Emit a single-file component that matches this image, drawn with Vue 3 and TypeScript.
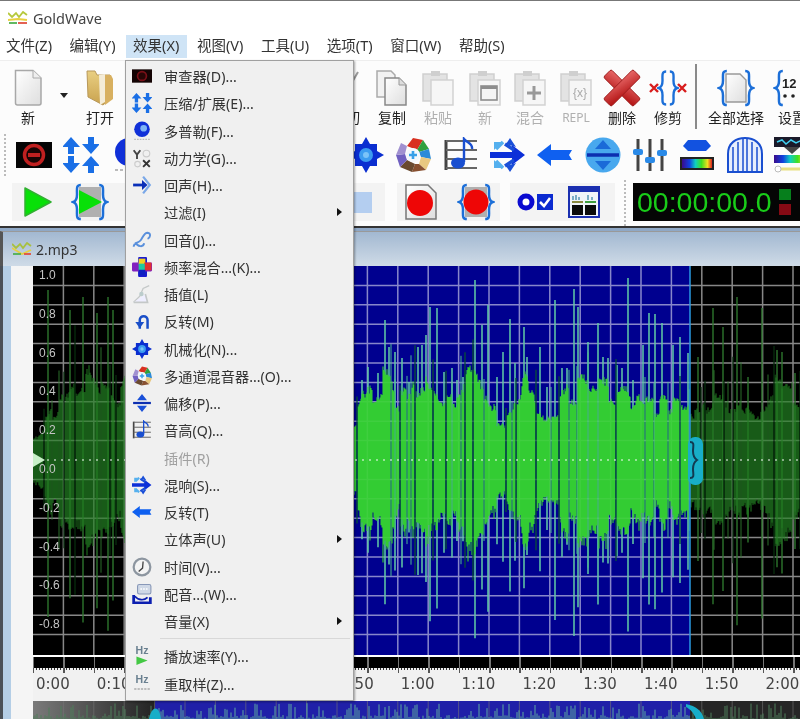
<script setup lang="ts">
interface MenuEntry { label?: string; icon?: string; disabled?: boolean; sub?: boolean; sep?: boolean }
interface Tool { icon?: string; label?: string; off?: boolean; small?: boolean; kind?: string }

const menus: string[] = ['文件(Z)', '编辑(Y)', '效果(X)', '视图(V)', '工具(U)', '选项(T)', '窗口(W)', '帮助(S)']

const tools: Tool[] = [
  { icon: 'doc', label: '新' },
  { kind: 'drop' },
  { icon: 'folder', label: '打开' },
  { kind: 'gap' },
  { icon: 'cut', label: '剪切' },
  { icon: 'copy', label: '复制' },
  { icon: 'paste', label: '粘贴', off: true },
  { icon: 'pastenew', label: '新', off: true },
  { icon: 'pastemix', label: '混合', off: true },
  { icon: 'pasterepl', label: 'REPL', off: true, small: true },
  { icon: 'del', label: '删除' },
  { icon: 'trim', label: '修剪' },
  { kind: 'sep' },
  { icon: 'selall', label: '全部选择' },
  { icon: 'setup', label: '设置' },
]

const effects: string[] = ['stop', 'comp', 'doppler', '', '', '', '', 'gear', 'mix', 'note', 'reverb', 'left', 'offset', 'sliders', 'hue', 'arch', 'spectrum']

const menuItems: MenuEntry[] = [
  { label: '审查器(D)...', icon: 'stopm' },
  { label: '压缩/扩展(E)...', icon: 'comp' },
  { label: '多普勒(F)...', icon: 'doppler' },
  { label: '动力学(G)...', icon: 'dyn' },
  { label: '回声(H)...', icon: 'echo' },
  { label: '过滤(I)', sub: true },
  { label: '回音(J)...', icon: 'flange' },
  { label: '频率混合...(K)...', icon: 'eq' },
  { label: '插值(L)', icon: 'interp' },
  { label: '反转(M)', icon: 'invert' },
  { label: '机械化(N)...', icon: 'gear' },
  { label: '多通道混音器...(O)...', icon: 'mix' },
  { label: '偏移(P)...', icon: 'shift' },
  { label: '音高(Q)...', icon: 'note' },
  { label: '插件(R)', disabled: true },
  { label: '混响(S)...', icon: 'reverb' },
  { label: '反转(T)', icon: 'left' },
  { label: '立体声(U)', sub: true },
  { label: '时间(V)...', icon: 'clock' },
  { label: '配音...(W)...', icon: 'voice' },
  { label: '音量(X)', sub: true },
  { sep: true },
  { label: '播放速率(Y)...', icon: 'hzplay' },
  { label: '重取样(Z)...', icon: 'hzres' },
]

const yLabels = ['1.0', '0.8', '0.6', '0.4', '0.2', '0.0', '-0.2', '-0.4', '-0.6', '-0.8']
const rulerLabels = ['0:00', '0:10', '0:20', '0:30', '0:40', '0:50', '1:00', '1:10', '1:20', '1:30', '1:40', '1:50', '2:00']

/* ---- waveform geometry, local x = page x - 33, y = page y - 266 ---- */
const W = 767
const H = 389
const MID = 194
const SEL_A = 155 - 33
const SEL_B = 690 - 33

let seed = 12345
const rnd = (): number => {
  seed = (seed * 1664525 + 1013904223) % 4294967296
  return seed / 4294967296
}

const env: [number, number][] = [
  [33, 18], [45, 35], [60, 55], [75, 82], [90, 90], [100, 70], [115, 60], [126, 70], [150, 60], [200, 70], [250, 60],
  [300, 50], [354, 40], [366, 65], [385, 80], [400, 55], [410, 70], [425, 85], [440, 55], [455, 60], [470, 85],
  [490, 45], [510, 40], [525, 75], [545, 45], [560, 55], [580, 75], [600, 70], [620, 60], [640, 60], [660, 52],
  [690, 50], [700, 50], [715, 65], [740, 60], [760, 50], [775, 70], [785, 65], [800, 55],
]
const envAt = (x: number): number => {
  for (let i = 1; i < env.length; i++) {
    if (x <= env[i][0]) {
      const [x0, y0] = env[i - 1]
      const [x1, y1] = env[i]
      return y0 + ((y1 - y0) * (x - x0)) / (x1 - x0)
    }
  }
  return 50
}

/* spike peaks read from the picture: [page x, page top y] */
const peaks: [number, number][] = [
  [48, 290], [70, 310], [83, 297], [97, 313], [108, 297], [113, 310],
  [362, 380], [368, 367], [378, 373], [385, 320], [389, 347], [395, 352], [402, 358], [409, 382], [418, 347], [422, 345],
  [426, 335], [430, 307], [437, 308], [444, 372], [452, 368], [457, 380], [463, 377], [475, 280], [482, 325], [488, 305],
  [497, 377], [503, 352], [510, 319], [515, 363], [524, 327], [527, 357], [540, 347], [547, 387], [555, 300], [562, 368],
  [567, 368], [574, 289], [578, 307], [588, 342], [598, 323], [603, 357], [608, 358], [617, 365], [622, 368], [628, 278],
  [633, 380], [643, 345], [649, 313], [655, 314], [662, 323], [673, 345], [680, 337], [688, 353],
  [698, 357], [713, 308], [723, 327], [737, 297], [748, 377], [762, 308], [777, 350], [782, 352], [795, 373],
]

const line = (x: number, a: number, b: number): string => `M${x} ${(MID - a).toFixed(1)}V${(MID + b).toFixed(1)}`
let bodySel = '', bodyDim = '', slitSel = '', slitDim = '', midSel = '', midDim = '', peakSel = '', peakDim = ''

for (const [px, top] of peaks) {
  const x = px - 33
  const a = 460 - top
  const b = a * (0.92 + rnd() * 0.14)
  const seg = line(x, a, b)
  if (x > SEL_A && x < SEL_B) peakSel += seg
  else peakDim += seg
}

/* the body is built from narrow bursts of differing height, split by dark slits */
let cx = 0
while (cx < W) {
  const burst = 3 + Math.floor(rnd() * 8)
  const gain = 0.78 + rnd() * 0.42
  for (let i = 0; i < burst && cx < W; i++, cx++) {
    const e = envAt(cx + 33) * gain * (0.94 + rnd() * 0.12)
    const inSel = cx > SEL_A && cx < SEL_B
    const seg = line(cx, e, e * (0.9 + rnd() * 0.2))
    if (inSel) bodySel += seg
    else bodyDim += seg
  }
  if (rnd() < 0.62) {
    const inSel = cx > SEL_A && cx < SEL_B
    const e = envAt(cx + 33) * (1.25 + rnd() * 0.45)
    const seg = line(cx, e, e)
    if (rnd() < 0.6) {
      if (inSel) slitSel += seg
      else slitDim += seg
    } else if (inSel) midSel += seg
    else midDim += seg
    cx += 1
  }
}

let gridH = ''
for (let k = 1; k < 20; k++) if (k !== 10) gridH += `M0 ${(19.4 * k).toFixed(1)}H${W}`
let gridV = ''
for (let k = 1; k * 30.4 < W; k++) gridV += `M${(k * 30.4).toFixed(1)} 0V${H}`
const grid = gridH + gridV

let miniSel = '', miniDim = ''
for (let x = 0; x < W; x += 2) {
  const h = rnd() < 0.3 ? 4 + rnd() * 12 : rnd() * 4
  const seg = `M${x} 18V${(18 - h).toFixed(1)}`
  if (x > SEL_A && x < SEL_B) miniSel += seg
  else miniDim += seg
}
let miniGrid = ''
for (let k = 1; k * 30.4 < W; k++) miniGrid += `M${(k * 30.4).toFixed(1)} 0V18`
</script>

<template>
  <div class="app">
    <svg class="defs" aria-hidden="true">
      <defs>
        <linearGradient id="paper" x1="0" y1="0" x2="1" y2="1"><stop offset="0" stop-color="#fff" /><stop offset="1" stop-color="#dedede" /></linearGradient>
        <linearGradient id="gold" x1="0" y1="0" x2="0" y2="1"><stop offset="0" stop-color="#e9cf82" /><stop offset="1" stop-color="#c9a24e" /></linearGradient>
        <linearGradient id="redx" x1="0" y1="0" x2="1" y2="1"><stop offset="0" stop-color="#e96a6a" /><stop offset="1" stop-color="#b01010" /></linearGradient>
        <linearGradient id="rainbow" x1="0" y1="0" x2="1" y2="0">
          <stop offset="0" stop-color="#3a0a8a" /><stop offset=".25" stop-color="#1040e0" /><stop offset=".45" stop-color="#10d0c0" /><stop offset=".65" stop-color="#40e020" /><stop offset=".85" stop-color="#f0e020" /><stop offset="1" stop-color="#e02020" />
        </linearGradient>

        <symbol id="brace-l" viewBox="0 0 12 40"><path d="M10 2C5 2 6 6 6 12c0 5-1 7-4 8 3 1 4 3 4 8 0 6-1 10 4 10" fill="none" stroke="#1c6fd8" stroke-width="2.6" /></symbol>
        <symbol id="brace-r" viewBox="0 0 12 40"><path d="M2 2c5 0 4 4 4 10 0 5 1 7 4 8-3 1-4 3-4 8 0 6 1 10-4 10" fill="none" stroke="#1c6fd8" stroke-width="2.6" /></symbol>

        <symbol id="doc" viewBox="0 0 30 38"><path d="M2.500 1.500H20L28 9V34a2 2 0 0 1-2 2H4.500a2 2 0 0 1-2-2Z" fill="url(#paper)" stroke="#a8a8a8" stroke-width="1.500" /><path d="M20 1.500V9H28" fill="#eee" stroke="#aaa" /></symbol>
        <symbol id="folder" viewBox="0 0 30 38"><path d="M2 2H10L12 6H25V30L18 36L3 28Z" fill="url(#gold)" stroke="#b8985a" /><path d="M14 6L20 5V33L15 36Z" fill="#f4ecd8" /><path d="M20 6H26L28 10V30L20 36Z" fill="#d8b060" /></symbol>
        <symbol id="cut" viewBox="0 0 36 38"><path d="M12 34L30 3M24 34L6 3" stroke="#999" stroke-width="2" fill="none" /></symbol>
        <symbol id="copy" viewBox="0 0 34 38"><path d="M2 2H16L20 6V28H2Z" fill="#f2f2f2" stroke="#aaa" stroke-width="1.500" /><path d="M10 9H24L31 16V36H10Z" fill="url(#paper)" stroke="#888" stroke-width="1.500" /><path d="M24 9V16H31" fill="#ddd" stroke="#999" /></symbol>
        <symbol id="clip" viewBox="0 0 34 38"><path d="M2 5H26V32H2Z" fill="#e3e3e3" stroke="#cfcfcf" stroke-width="1.500" /><rect x="10" y="2" width="9" height="5" fill="#cfcfcf" /><path d="M10 11H32V36H10Z" fill="#f6f6f6" stroke="#d2d2d2" stroke-width="1.500" /></symbol>
        <symbol id="paste" viewBox="0 0 34 38"><use href="#clip" width="34" height="38" /></symbol>
        <symbol id="pastenew" viewBox="0 0 34 38"><use href="#clip" width="34" height="38" /><rect x="13" y="17" width="16" height="14" fill="#f4f4f4" stroke="#8d8d8d" stroke-width="1.600" /><rect x="13" y="17" width="16" height="3" fill="#8d8d8d" /></symbol>
        <symbol id="pastemix" viewBox="0 0 34 38"><use href="#clip" width="34" height="38" /><path d="M21 17V31M14 24H28" stroke="#999" stroke-width="3" /></symbol>
        <symbol id="pasterepl" viewBox="0 0 34 38"><use href="#clip" width="34" height="38" /><text x="21" y="28" text-anchor="middle" font-size="12" fill="#aaa" font-family="Liberation Sans, sans-serif">{x}</text></symbol>
        <symbol id="del" viewBox="0 0 42 42"><g transform="rotate(45 21 21)"><rect x="-2" y="15" width="46" height="12" rx="2" fill="url(#redx)" stroke="#9c1c1c" /><rect x="15" y="-2" width="12" height="46" rx="2" fill="url(#redx)" stroke="#9c1c1c" /></g></symbol>
        <symbol id="trim" viewBox="0 0 38 38"><use href="#brace-l" x="8" y="0" width="11" height="38" /><use href="#brace-r" x="19" y="0" width="11" height="38" /><path d="M1 15L9 23M9 15L1 23M29 15L37 23M37 15L29 23" stroke="#d81c1c" stroke-width="2.400" /></symbol>
        <symbol id="selall" viewBox="0 0 38 38"><use href="#brace-l" x="0" y="0" width="12" height="38" /><use href="#brace-r" x="26" y="0" width="12" height="38" /><path d="M9 5H23L29 11V33H9Z" fill="url(#paper)" stroke="#999" stroke-width="1.400" /></symbol>
        <symbol id="setup" viewBox="0 0 38 38"><use href="#brace-l" x="0" y="0" width="12" height="38" /><text x="9" y="19" font-size="13" font-weight="700" fill="#222" font-family="Liberation Sans, sans-serif">12</text><circle cx="12" cy="27" r="1.800" fill="#222" /><circle cx="20" cy="27" r="1.800" fill="#222" /></symbol>

        <symbol id="stop" viewBox="0 0 36 36"><rect x="0" y="5" width="36" height="26" fill="#050505" /><circle cx="18" cy="18" r="9.500" fill="#1a0404" stroke="#c02020" stroke-width="3.500" /><path d="M12 18H24" stroke="#c02020" stroke-width="4" /></symbol>
        <symbol id="stopm" viewBox="0 0 36 36"><rect x="0" y="6" width="36" height="24" fill="#140404" /><circle cx="18" cy="18" r="8" fill="#280606" stroke="#7a1018" stroke-width="3" /></symbol>
        <symbol id="comp" viewBox="0 0 36 36">
          <g fill="#1a6fe6"><path d="M8 0L17 10H11V17H5V10H-1Z" /><path d="M28 17L19 7H25V0H31V7H37Z" /><path d="M8 36L-1 26H5V19H11V26H17Z" /><path d="M28 19L37 29H31V36H25V29H19Z" /></g>
        </symbol>
        <symbol id="doppler" viewBox="0 0 36 36"><circle cx="18" cy="15" r="14" fill="#1030d8" /><circle cx="21" cy="13" r="6" fill="#7fb4f5" /><path d="M4 33H32" stroke="#bbb" stroke-width="2" stroke-dasharray="3 2" /></symbol>
        <symbol id="dyn" viewBox="0 0 36 36"><path d="M3 4L9 12L15 4M9 12V20" stroke="#444" stroke-width="3.400" fill="none" /><path d="M20 22L32 34M32 22L20 34" stroke="#333" stroke-width="3.400" /><circle cx="26" cy="10" r="6" fill="none" stroke="#ccc" stroke-width="2" /><circle cx="10" cy="29" r="5" fill="none" stroke="#ccc" stroke-width="2" /></symbol>
        <symbol id="echo" viewBox="0 0 36 36"><path d="M20 3L32 18L20 33" fill="none" stroke="#7aa8e8" stroke-width="4" /><path d="M2 18H22" stroke="#0a2fb8" stroke-width="5" /><path d="M18 9L28 18L18 27Z" fill="#0a2fb8" /></symbol>
        <symbol id="flange" viewBox="0 0 36 36"><path d="M3 30C3 22 12 24 16 18C20 12 22 5 28 5C35 6 33 14 28 16M6 22C10 30 20 32 22 24" fill="none" stroke="#5a90dc" stroke-width="3.400" /></symbol>
        <symbol id="eq" viewBox="0 0 36 36"><rect x="11" y="0" width="16" height="36" rx="2" fill="#1a1ad0" /><rect x="0" y="10" width="36" height="16" rx="2" fill="#8020c0" /><rect x="12" y="3" width="12" height="10" fill="#f0d020" /><rect x="22" y="10" width="13" height="14" fill="#e03030" /><rect x="12" y="12" width="11" height="12" fill="#20c8a0" /><rect x="12" y="23" width="12" height="10" fill="#1020c0" /></symbol>
        <symbol id="interp" viewBox="0 0 36 36"><path d="M3 33L14 22L20 8L31 3" stroke="#c4c8c8" stroke-width="2.400" fill="none" /><path d="M3 33H28L24 18" stroke="#c4c8c8" stroke-width="3" fill="#eef" /><circle cx="17" cy="18" r="4" fill="#bcc" /></symbol>
        <symbol id="invert" viewBox="0 0 36 36"><path d="M14 32V16C14 7 28 7 28 16V32" fill="none" stroke="#1a4fc8" stroke-width="4.500" /><path d="M6 20L14 31L22 20Z" fill="#1a4fc8" /></symbol>
        <symbol id="gear" viewBox="0 0 36 36"><polygon points="18,0 22,7 29,7 29,14 36,18 29,22 29,29 22,29 18,36 14,29 7,29 7,22 0,18 7,14 7,7 14,7" fill="#0a2ed0" /><circle cx="18" cy="18" r="7" fill="#3c9cf0" /><circle cx="18" cy="18" r="3" fill="#7cc4f8" /></symbol>
        <symbol id="mix" viewBox="0 0 36 36">
          <polygon points="18,1 28,3 22,13 12,9" fill="#d83020" /><polygon points="28,3 34,12 24,15 22,13" fill="#30a040" /><polygon points="34,12 36,22 26,20 24,15" fill="#2a8ad8" /><polygon points="36,22 31,33 24,27 26,20" fill="#e8c880" /><polygon points="31,33 17,35 20,27 24,27" fill="#885030" /><polygon points="17,35 5,30 12,23 20,27" fill="#6a4a30" /><polygon points="5,30 1,18 10,17 12,23" fill="#7060c0" /><polygon points="1,18 6,6 12,9 10,17" fill="#a090d0" /><circle cx="18" cy="18" r="7" fill="#f4f8fc" /><path d="M18 14V22M14 18H22" stroke="#38a0e8" stroke-width="2.600" />
        </symbol>
        <symbol id="note" viewBox="0 0 36 36"><path d="M3 3V33" stroke="#444" stroke-width="3" /><path d="M3 4H34M3 13H34M3 22H34M3 31H34" stroke="#666" stroke-width="1.800" /><ellipse cx="15" cy="26" rx="7" ry="5.500" fill="#1a4fd0" /><path d="M21 25V2C24 6 30 6 29 12" stroke="#1a4fd0" stroke-width="2.400" fill="none" /></symbol>
        <symbol id="reverb" viewBox="0 0 36 36">
          <path d="M0 15H22V8L35 18L22 28V21H0Z" fill="#0c2fd8" />
          <g fill="none" stroke-width="3.500"><path d="M6 12L13 5" stroke="#55b0ee" /><path d="M6 24L13 31" stroke="#55b0ee" /><path d="M15 7L24 13" stroke="#1a4fd8" /><path d="M15 29L24 23" stroke="#1a4fd8" /></g>
          <path d="M4 5H12L4 13Z M4 31H12L4 23Z" fill="#55b0ee" /><path d="M20 1L26 10L16 7Z M20 35L26 26L16 29Z" fill="#1a4fd8" />
        </symbol>
        <symbol id="left" viewBox="0 0 36 36"><path d="M0 18L14 7V13H35L32 18L35 23H14V29Z" fill="#0f60f0" /></symbol>
        <symbol id="offset" viewBox="0 0 36 36"><circle cx="18" cy="18" r="17.500" fill="#48a8ee" /><path d="M2 18H34" stroke="#0c2fb0" stroke-width="3.500" /><path d="M18 3L26 12H10Z M18 33L10 24H26Z" fill="#1a6ad8" /></symbol>
        <symbol id="shift" viewBox="0 0 36 36"><path d="M2 18H34" stroke="#0c2fb0" stroke-width="4" /><path d="M18 2L27 13H9Z M18 34L9 23H27Z" fill="#1a50d8" /></symbol>
        <symbol id="sliders" viewBox="0 0 36 36"><path d="M6 2V34M18 2V34M30 2V34" stroke="#444" stroke-width="3" /><rect x="1" y="12" width="10" height="6" rx="2" fill="#2a8ae8" /><rect x="13" y="20" width="10" height="6" rx="2" fill="#2a8ae8" /><rect x="25" y="13" width="10" height="6" rx="2" fill="#2a8ae8" /></symbol>
        <symbol id="hue" viewBox="0 0 36 36"><polygon points="9,3 27,3 32,9 27,14 9,14 4,9" fill="#1252e0" /><rect x="1" y="20" width="34" height="13" fill="#222" /><rect x="3" y="22" width="30" height="9" fill="url(#rainbow)" /></symbol>
        <symbol id="arch" viewBox="0 0 36 36"><path d="M1 35V17C1 6 9 1 18 1C27 1 35 6 35 17V35Z" fill="#e6eefc" stroke="#1a4fd0" stroke-width="2" /><path d="M6 35V10M11 35V5M16 35V2M20 35V2M25 35V5M30 35V10" stroke="#1a4fd0" stroke-width="1.500" /></symbol>
        <symbol id="spectrum" viewBox="0 0 36 36"><rect x="0" y="0" width="36" height="10" fill="#1a1a2a" /><path d="M3 5L8 3L12 7L17 3L22 6L28 3L33 6" stroke="#40d0f0" stroke-width="1.500" fill="none" /><polygon points="10,10 26,10 18,17" fill="#444" /><rect x="0" y="18" width="36" height="8" fill="url(#rainbow)" /><path d="M4 32H36" stroke="#e8e080" stroke-width="3" /><circle cx="4" cy="32" r="3" fill="#fff" stroke="#bbb" /></symbol>
        <symbol id="clock" viewBox="0 0 36 36"><circle cx="18" cy="18" r="15" fill="#f4f4f4" stroke="#8d96a0" stroke-width="4" /><path d="M20 8L19 20L12 26" stroke="#444" stroke-width="2.400" fill="none" /></symbol>
        <symbol id="voice" viewBox="0 0 36 36"><rect x="10" y="1" width="24" height="17" rx="3" fill="#cfd8e6" stroke="#8898b8" stroke-width="2" /><path d="M15 9H29" stroke="#fff" stroke-width="3" stroke-dasharray="3 2" /><path d="M3 20V34H33V24" fill="none" stroke="#0c1fb0" stroke-width="5" /><path d="M5 22C12 30 22 30 28 24" fill="none" stroke="#0c1fb0" stroke-width="3" /></symbol>
        <symbol id="hzplay" viewBox="0 0 36 36"><text x="18" y="15" text-anchor="middle" font-size="19" font-weight="700" fill="#6a8090" font-family="Liberation Sans, sans-serif">Hz</text><polygon points="8,19 28,26 8,34" fill="#44c844" /></symbol>
        <symbol id="hzres" viewBox="0 0 36 36"><text x="18" y="17" text-anchor="middle" font-size="19" font-weight="700" fill="#6a8090" font-family="Liberation Sans, sans-serif">Hz</text><path d="M4 27H32" stroke="#aaa" stroke-width="3" stroke-dasharray="4 2" /></symbol>
        <symbol id="play" viewBox="0 0 30 30"><polygon points="2,1 28,15 2,29" fill="#08e008" stroke="#30b030" stroke-width="1.500" stroke-linejoin="round" /></symbol>
        <symbol id="bplay" viewBox="0 0 38 38"><rect x="8" y="4" width="22" height="30" fill="#b0b0b0" /><use href="#brace-l" x="0" y="0" width="12" height="38" /><use href="#brace-r" x="26" y="0" width="12" height="38" /><polygon points="8,7 31,19 8,31" fill="#08e008" /></symbol>
        <symbol id="recdoc" viewBox="0 0 34 38"><path d="M2 2H24L32 10V36H2Z" fill="url(#paper)" stroke="#777" stroke-width="1.500" /><circle cx="16" cy="20" r="13" fill="#ee0606" /></symbol>
        <symbol id="brec" viewBox="0 0 38 38"><rect x="8" y="4" width="22" height="30" fill="#b0b0b0" /><use href="#brace-l" x="0" y="0" width="12" height="38" /><use href="#brace-r" x="26" y="0" width="12" height="38" /><circle cx="19" cy="19" r="12.500" fill="#ee0606" /></symbol>
        <symbol id="oncheck" viewBox="0 0 36 20"><circle cx="9" cy="10" r="6" fill="#fff" stroke="#0a0ad0" stroke-width="5" /><rect x="20" y="2" width="16" height="16" fill="#0a2ad0" /><path d="M23 10L27 14L33 6" stroke="#fff" stroke-width="2.500" fill="none" /></symbol>
        <symbol id="panel" viewBox="0 0 32 32"><rect x="1" y="1" width="30" height="30" fill="#f0f4f8" stroke="#1a2fb0" stroke-width="2" /><rect x="1" y="1" width="30" height="5" fill="#1a2fb0" /><path d="M5 14V10M8 14V9M11 14V11M20 14V9M24 14V11" stroke="#4a90b0" stroke-width="1.400" /><rect x="4" y="19" width="11" height="10" fill="#0a0a0a" /><rect x="17" y="19" width="11" height="10" fill="#0a0a0a" /><path d="M4 16H15" stroke="#8a8a40" stroke-width="2" /><path d="M17 16H28" stroke="#40a040" stroke-width="2" /></symbol>
      </defs>
    </svg>

    <header class="titlebar">
      <svg class="logo" viewBox="0 0 20 14">
        <path d="M0 2L4 6L8 2L11 6L15 1L19 4" fill="none" stroke="#b6c83c" stroke-width="1.800" />
        <path d="M0 9L10 8L19 9" fill="none" stroke="#e8d040" stroke-width="1.800" />
        <path d="M1 12H9" stroke="#50b050" stroke-width="1.800" /><path d="M10 12H19" stroke="#e05040" stroke-width="1.800" />
      </svg>
      <span class="app-name">GoldWave</span>
    </header>

    <nav class="menubar">
      <span v-for="m in menus" :key="m" class="menu-name" :class="{ active: m === '效果(X)' }">{{ m }}</span>
    </nav>

    <section class="tb1">
      <template v-for="(t, i) in tools" :key="i">
        <span v-if="t.kind === 'gap'"></span>
        <span v-else-if="t.kind === 'drop'" class="drop"><i></i></span>
        <span v-else-if="t.kind === 'sep'" class="vsep"><i></i></span>
        <div v-else class="tool" :class="{ off: t.off }">
          <svg class="tool-icon"><use :href="'#' + t.icon" width="40" height="38" /></svg>
          <span class="tool-label" :class="{ small: t.small }">{{ t.label }}</span>
        </div>
      </template>
    </section>

    <section class="tb2">
      <span class="grip"></span>
      <span v-for="(e, i) in effects" :key="i" class="fx">
        <svg v-if="e" class="fx-icon"><use :href="'#' + e" width="36" height="36" /></svg>
      </span>
    </section>

    <section class="tb3">
      <div class="group g1">
        <svg class="play"><use href="#play" width="30" height="30" /></svg>
        <svg class="bplay"><use href="#bplay" width="38" height="38" /></svg>
        <span class="pale"></span>
      </div>
      <div class="group g2">
        <svg class="rec"><use href="#recdoc" width="34" height="38" /></svg>
        <svg class="rec"><use href="#brec" width="38" height="38" /></svg>
      </div>
      <div class="group g3">
        <svg class="onchk"><use href="#oncheck" width="36" height="20" /></svg>
        <svg class="panel"><use href="#panel" width="32" height="32" /></svg>
      </div>
      <span class="grip short"></span>
      <div class="timer">
        <span class="digits">00:00:00.0</span>
        <span class="lamps"><i class="g"></i><i class="r"></i></span>
      </div>
    </section>

    <div class="mdi-top"></div>

    <section class="doc-title">
      <svg class="doc-logo" viewBox="0 0 20 14">
        <path d="M0 2L4 6L8 2L11 6L15 1L19 4" fill="none" stroke="#a8c040" stroke-width="1.800" />
        <path d="M0 6L10 12L19 8" fill="none" stroke="#e8d040" stroke-width="1.800" />
        <path d="M1 12H9" stroke="#50b050" stroke-width="1.800" /><path d="M12 12H19" stroke="#e05040" stroke-width="1.800" />
      </svg>
      <span>2.mp3</span>
    </section>

    <section class="doc-body">
      <div class="gutter"></div>
      <div class="tracks">
        <svg class="wave" :viewBox="`0 0 ${W} ${H}`">
          <rect :width="W" :height="H" fill="#000" />
          <rect :x="SEL_A" :width="SEL_B - SEL_A" :height="H" fill="#00008f" />
          <path :d="grid" stroke="#fff" stroke-opacity=".5" stroke-width="1.500" fill="none" />
          <path :d="peakDim" stroke="#2a6e2a" stroke-width="1.500" />
          <path :d="midDim" stroke="#2a6e2a" />
          <path :d="bodyDim" stroke="#217a21" />
          <path :d="slitDim" stroke="#062a0c" stroke-width="1.400" />
          <path :d="peakSel" stroke="#5cc0a4" stroke-width="1.600" />
          <path :d="midSel" stroke="#4ab890" />
          <path :d="bodySel" stroke="#33cc33" stroke-width="1.100" />
          <path :d="slitSel" stroke="#064a3c" stroke-width="1.400" />
          <path :d="grid" stroke="#fff" stroke-opacity=".06" stroke-width="1.500" fill="none" />
          <path :d="`M0 ${MID}H${W}`" stroke="#fff" stroke-opacity=".65" stroke-width="1.500" stroke-dasharray="2 5" />
          <path :d="`M${SEL_B} 0V${H}`" stroke="#2a9ae0" stroke-width="1.500" />
          <polygon :points="`0,${MID - 7} 12,${MID} 0,${MID + 7}`" fill="#c8f0c8" />
          <rect :x="SEL_B - 2" :y="MID - 23" width="15" height="48" rx="7" fill="#18aec8" />
          <path :d="`M${SEL_B} ${MID - 18}c5 0 3 4 3 9c0 4 1 7 4 9c-3 2-4 5-4 9c0 5 2 9-3 9`" stroke="#123a50" stroke-width="2" fill="none" />
          <text v-for="(l, i) in yLabels" :key="l" x="6" :y="13 + i * 38.8" class="ylab">{{ l }}</text>
        </svg>
        <div class="white-line"></div>
        <div class="band"></div>
        <div class="ruler">
          <span v-for="r in rulerLabels" :key="r" class="tick-label">{{ r }}</span>
        </div>
        <svg class="overview" :viewBox="`0 0 ${W} 18`" preserveAspectRatio="none">
          <defs>
            <linearGradient id="ovl" x1="0" y1="0" x2="1" y2="0"><stop offset="0" stop-color="#7a7a7a" /><stop offset="1" stop-color="#222" /></linearGradient>
          </defs>
          <rect :width="SEL_A" height="18" fill="url(#ovl)" />
          <rect :x="SEL_A" :width="SEL_B - SEL_A" height="18" fill="#2020a8" />
          <rect :x="SEL_B" :width="W - SEL_B" height="18" fill="#262626" />
          <path :d="miniGrid" stroke="#777" stroke-opacity=".6" />
          <path :d="miniDim" stroke="#4f7f5a" />
          <path :d="miniSel" stroke="#5ca8a0" />
          <path :d="`M${SEL_A - 6} 18C${SEL_A - 4} 6 ${SEL_A + 4} 2 ${SEL_A + 6} 18`" fill="#18aec8" />
          <path :d="`M${SEL_B - 4} 3C${SEL_B + 6} 5 ${SEL_B + 12} 10 ${SEL_B + 14} 18H${SEL_B + 6}C${SEL_B + 4} 12 ${SEL_B} 8 ${SEL_B - 4} 6Z`" fill="#18aec8" />
        </svg>
      </div>
    </section>

    <aside class="dropdown">
      <template v-for="(it, i) in menuItems" :key="i">
        <div v-if="it.sep" class="menu-sep"></div>
        <div v-else class="menu-item" :class="{ disabled: it.disabled }">
          <span class="mi-icon">
            <svg v-if="it.icon" class="mi-svg"><use :href="'#' + it.icon" width="20" height="20" /></svg>
          </span>
          <span class="mi-label">{{ it.label }}</span>
          <i v-if="it.sub" class="mi-arrow"></i>
        </div>
      </template>
    </aside>
  </div>
</template>

<style scoped>
.app {
  position: relative;
  width: 800px;
  height: 719px;
  overflow: hidden;
  background: #fff;
  display: flex;
  flex-direction: column;
  font-family: "Noto Sans", "Noto Sans CJK SC", sans-serif;
  color: #333;
  filter: blur(0.5px);
}
.defs { position: absolute; width: 0; height: 0; }

.titlebar {
  flex: none;
  height: 35px;
  box-sizing: border-box;
  border-top: 1px solid #777;
  display: flex;
  align-items: center;
  padding-left: 8px;
  background: #fff;
}
.logo { width: 20px; height: 14px; margin-right: 5px; }
.app-name { font-size: 14.500px; color: #444; }

.menubar {
  flex: none;
  height: 25px;
  box-sizing: border-box;
  padding: 0 0 2px 0;
  display: flex;
  align-items: center;
  gap: 2.600px;
  background: #fff;
}
.menu-name {
  height: 23px;
  line-height: 21px;
  box-sizing: border-box;
  padding: 0 7.500px;
  font-size: 14.500px;
  color: #333;
  white-space: nowrap;
}
.menu-name:first-child { margin-left: -1.500px; }
.menu-name.active { background: #cfe4f6; }

.tb1 {
  flex: none;
  height: 70px;
  box-sizing: border-box;
  padding: 8px 0 0 5px;
  background: #fcfcfc;
  border-top: 1px solid #eee;
  display: grid;
  grid-template-columns: 46px 26px 46px 200px 46px 46px 46px 48px 42px 50px 42px 50px 6px 74px 38px;
  grid-template-rows: 62px;
}
.tool { display: flex; flex-direction: column; align-items: center; min-width: 0; }
.tool-icon { width: 40px; height: 38px; flex: none; }
.tool-label { font-size: 14px; line-height: 22px; color: #222; white-space: nowrap; }
.tool.off .tool-label { color: #b0b0b0; }
.tool-label.small { font-size: 12px; }
.drop { display: flex; justify-content: center; padding-top: 24px; }
.drop i { width: 0; height: 0; border: 4px solid transparent; border-top: 5px solid #222; }
.vsep { display: flex; justify-content: center; margin-top: -5px; }
.vsep i { display: block; width: 2px; height: 65px; background: #8a8a8a; }

.tb2 {
  flex: none;
  position: relative;
  height: 50px;
  box-sizing: border-box;
  padding-left: 10.300px;
  background: #fcfcfc;
  display: grid;
  grid-template-columns: repeat(17, 47.400px);
  align-items: center;
}
.grip {
  position: absolute;
  left: 4px;
  top: 4px;
  bottom: 4px;
  width: 2px;
  background: repeating-linear-gradient(180deg, #bbb 0 2px, transparent 2px 4px);
}
.fx { display: flex; justify-content: center; }
.fx-icon { width: 36px; height: 36px; }

.tb3 {
  flex: none;
  height: 46px;
  box-sizing: border-box;
  padding: 3px 0 5px 12px;
  display: flex;
  background: #fcfcfc;
}
.group { background: #f3f3f3; display: flex; align-items: center; }
.g1 { width: 373px; }
.play { width: 30px; height: 30px; margin-left: 11px; }
.bplay { width: 38px; height: 38px; margin-left: 18px; }
.pale { width: 20px; height: 21px; background: #b4cef0; margin-left: auto; margin-right: 13px; }
.g2 { width: 103px; margin-left: 12px; padding-left: 7px; box-sizing: border-box; gap: 15px; }
.rec { width: 38px; height: 38px; }
.g3 { width: 105px; margin-left: 10px; padding-left: 7px; box-sizing: border-box; gap: 15px; }
.onchk { width: 36px; height: 20px; }
.panel { width: 32px; height: 32px; }
.grip.short { position: relative; left: 0; top: 0; bottom: 0; margin-left: 9px; height: 46px; flex: none; margin-top: -3px; }
.timer {
  flex: 1;
  margin-left: 7px;
  background: #050505;
  display: flex;
  align-items: center;
  padding-left: 4px;
  box-sizing: border-box;
}
.digits {
  font-family: "Liberation Sans", sans-serif;
  font-size: 28.500px;
  color: #19cc19;
  line-height: 1;
}
.lamps { display: flex; flex-direction: column; gap: 4px; margin-left: 7px; }
.lamps i { display: block; width: 12px; height: 11px; }
.lamps .g { background: #067f1c; }
.lamps .r { background: #860a14; }

.mdi-top {
  flex: none;
  height: 5px;
  box-sizing: border-box;
  border-top: 2px solid #333;
  background: #8fa8c6;
}
.doc-title {
  flex: none;
  height: 35px;
  box-sizing: border-box;
  border-left: 3px solid #555;
  border-top: 1px solid #999;
  background: linear-gradient(180deg, #a2b8d1, #cfdbe7);
  display: flex;
  align-items: center;
  padding-left: 9px;
  font-size: 14px;
  color: #333;
  gap: 4px;
}
.doc-logo { width: 20px; height: 14px; }
.doc-body { flex: 1; display: flex; min-height: 0; }
.gutter {
  flex: none;
  width: 33px;
  box-sizing: border-box;
  border-left: 3px solid #4a5058;
  background: linear-gradient(90deg, #b4cee6 8px, #f5f5f5 8px);
}
.tracks { flex: none; width: 767px; display: flex; flex-direction: column; }
.wave { display: block; flex: none; width: 767px; height: 389px; }
.ylab { font-family: "Liberation Sans", sans-serif; font-size: 12px; fill: #c4c4c4; }
.white-line { flex: none; height: 2px; background: #fff; }
.band {
  flex: none;
  height: 11px;
  background: repeating-linear-gradient(90deg, #777 0 1.500px, transparent 1.500px 30.400px) #000;
}
.ruler {
  flex: none;
  height: 33px;
  box-sizing: border-box;
  display: flex;
  align-items: center;
  padding-bottom: 2px;
  background:
    repeating-linear-gradient(90deg, #555 0 1.500px, transparent 1.500px 30.400px) top left / 100% 5px no-repeat,
    repeating-linear-gradient(90deg, #333 0 1px, transparent 1px 3.040px) top left / 100% 2px no-repeat,
    #f1f1f1;
}
.tick-label {
  flex: none;
  width: 60.800px;
  box-sizing: border-box;
  padding-left: 3px;
  font-family: "DejaVu Sans", sans-serif;
  font-size: 15px;
  color: #444;
}
.overview { display: block; flex: none; width: 767px; height: 18px; }

.dropdown {
  position: absolute;
  left: 125px;
  top: 60px;
  width: 229px;
  height: 641px;
  box-sizing: border-box;
  padding-top: 1.500px;
  background: #f0f0f0;
  border: 1px solid #a0a0a0;
  box-shadow: 1px 1px 2px rgba(0, 0, 0, .35);
}
.menu-item {
  height: 27.250px;
  display: flex;
  align-items: center;
  font-size: 14.200px;
  color: #333;
  white-space: nowrap;
}
.menu-item.disabled { color: #a0a0a0; }
.mi-icon { flex: none; width: 22px; height: 22px; margin-left: 5px; display: flex; align-items: center; justify-content: center; }
.mi-svg { width: 20px; height: 20px; }
.mi-label { margin-left: 11px; }
.mi-arrow {
  margin-left: auto;
  margin-right: 11px;
  width: 0;
  height: 0;
  border-top: 4px solid transparent;
  border-bottom: 4px solid transparent;
  border-left: 5px solid #111;
}
.menu-sep { height: 8px; margin-left: 34px; margin-right: 3px; display: flex; align-items: center; }
.menu-sep::before { content: ""; display: block; width: 100%; height: 1px; background: #d8d8d8; }
</style>
